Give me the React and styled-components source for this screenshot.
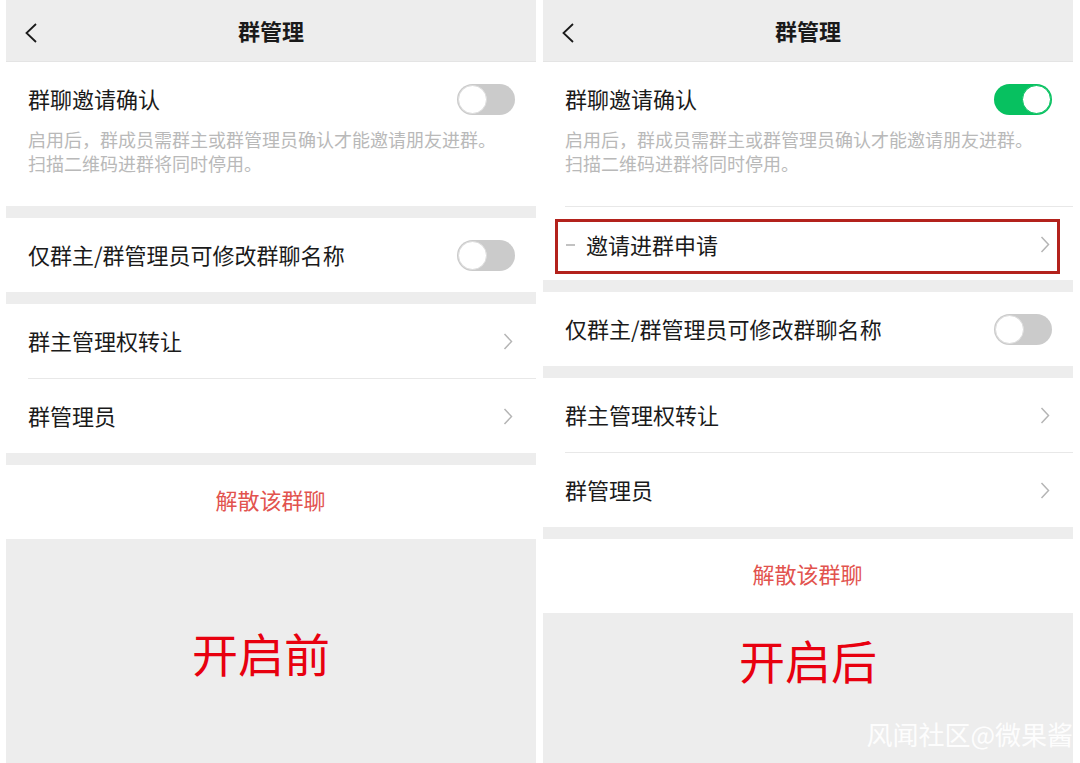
import React from 'react';
import styled, { createGlobalStyle } from 'styled-components';

const GlobalStyle = createGlobalStyle`
  body {
    margin: 0;
    background: #fff;
    font-family: 'Noto Sans CJK SC', 'Noto Sans', sans-serif;
  }
`;

const Page = styled.div`
  position: relative;
  width: 1080px;
  height: 763px;
  overflow: hidden;
  display: flex;
  gap: 7px;
  padding: 0 7px 0 6px;
  box-sizing: border-box;
  background: #fff;
`;

const Panel = styled.div`
  width: 530px;
  height: 100%;
  display: flex;
  flex-direction: column;
  gap: 12px;
  background: #ededed;
`;

const Header = styled.div`
  position: relative;
  height: 62px;
  flex: none;
  display: flex;
  align-items: center;
  justify-content: center;
  padding-bottom: 2px;
  box-sizing: border-box;
  border-bottom: 1px solid #e4e4e4;
  margin-bottom: -12px;
`;

const BackButton = styled.div`
  position: absolute;
  left: 19px;
  top: 23px;
  width: 12px;
  height: 20px;
  display: flex;
`;

const Title = styled.div`
  font-size: 22px;
  font-weight: 600;
  color: #1a1a1a;
  line-height: 1;
`;

const Section = styled.div`
  background: #fff;
  flex: none;
  display: flex;
  flex-direction: column;
`;

const SwitchBlock = styled.div`
  height: 144px;
  box-sizing: border-box;
  padding: 21px 21px 0 22px;
`;

const SwitchHead = styled.div`
  height: 32px;
  display: flex;
  align-items: center;
  justify-content: space-between;
`;

const Label = styled.span`
  font-size: 22px;
  color: #1a1a1a;
  line-height: 1;
  position: relative;
  top: -1px;
`;

const Desc = styled.div`
  margin-top: 12px;
  font-size: 18px;
  line-height: 24px;
  color: #b9b9b9;
`;

const Row = styled.div`
  height: 74px;
  box-sizing: border-box;
  display: flex;
  align-items: center;
  justify-content: ${(p) => (p.$center ? 'center' : 'space-between')};
  padding: 0 ${(p) => (p.$toggle ? 21 : 23)}px 0 22px;
`;

const Separator = styled.div`
  height: 1px;
  margin-left: 22px;
  background: #e8e8e8;
`;

const InviteRow = styled.div`
  height: 73px;
  box-sizing: border-box;
  padding: 12px 13px 6px 12px;
  display: flex;
`;

const Highlight = styled.div`
  flex: 1;
  border: 3px solid #b3221c;
  display: flex;
  align-items: center;
  padding: 0 7px 4px 8px;
`;

const Dash = styled.span`
  width: 9px;
  height: 2px;
  background: #c2c2c2;
  margin-right: 11px;
`;

const Grow = styled.span`
  flex: 1;
`;

const Danger = styled.span`
  font-size: 22px;
  line-height: 1;
  color: #e2534e;
  position: relative;
  top: -3px;
`;

const Track = styled.div`
  width: 58px;
  height: 31px;
  border-radius: 16px;
  background: ${(p) => (p.$on ? '#07c160' : '#cbcbcb')};
  display: flex;
  align-items: center;
  justify-content: ${(p) => (p.$on ? 'flex-end' : 'flex-start')};
  padding: 1px;
  box-sizing: border-box;
`;

const Knob = styled.div`
  width: 29px;
  height: 29px;
  border-radius: 50%;
  background: #fff;
  box-sizing: border-box;
  border: 1px solid ${(p) => (p.$on ? '#07c160' : '#dcdcdc')};
`;

const Filler = styled.div`
  flex: 1;
  display: flex;
  justify-content: center;
  padding-top: ${(p) => p.$top}px;
  padding-right: ${(p) => p.$shift}px;
  margin-top: -12px;
`;

const StageLabel = styled.div`
  font-size: 46px;
  line-height: 46px;
  height: 46px;
  color: #e8000f;
`;

const Watermark = styled.div`
  position: absolute;
  right: 7px;
  bottom: 16px;
  font-size: 26px;
  line-height: 1;
  color: rgba(255, 255, 255, 0.92);
`;

const Chevron = () => (
  <svg width="10" height="17" viewBox="0 0 10 17">
    <polyline points="1.5,1 8.5,8.5 1.5,16" fill="none" stroke="#b5b5b5" strokeWidth="1.5" />
  </svg>
);

const BackIcon = () => (
  <svg width="12" height="20" viewBox="0 0 12 20">
    <polyline points="11,1 1.5,10 11,19" fill="none" stroke="#1a1a1a" strokeWidth="1.8" />
  </svg>
);

const Toggle = ({ on }) => (
  <Track $on={on}>
    <Knob $on={on} />
  </Track>
);

const Screen = ({ on, label, labelTop, shift }) => (
  <Panel>
    <Header>
      <BackButton>
        <BackIcon />
      </BackButton>
      <Title>群管理</Title>
    </Header>

    <Section>
      <SwitchBlock>
        <SwitchHead>
          <Label>群聊邀请确认</Label>
          <Toggle on={on} />
        </SwitchHead>
        <Desc>
          启用后，群成员需群主或群管理员确认才能邀请朋友进群。
          <br />
          扫描二维码进群将同时停用。
        </Desc>
      </SwitchBlock>
      {on && (
        <>
          <Separator />
          <InviteRow>
            <Highlight>
              <Dash />
              <Label>邀请进群申请</Label>
              <Grow />
              <Chevron />
            </Highlight>
          </InviteRow>
        </>
      )}
    </Section>

    <Section>
      <Row $toggle>
        <Label>仅群主/群管理员可修改群聊名称</Label>
        <Toggle on={false} />
      </Row>
    </Section>

    <Section>
      <Row>
        <Label>群主管理权转让</Label>
        <Chevron />
      </Row>
      <Separator />
      <Row>
        <Label>群管理员</Label>
        <Chevron />
      </Row>
    </Section>

    <Section>
      <Row $center>
        <Danger>解散该群聊</Danger>
      </Row>
    </Section>

    <Filler $top={labelTop} $shift={shift}>
      <StageLabel>{label}</StageLabel>
    </Filler>
  </Panel>
);

export default function App() {
  return (
    <>
      <GlobalStyle />
      <Page>
        <Screen on={false} label="开启前" labelTop={90} shift={20} />
        <Screen on label="开启后" labelTop={23} shift={0} />
        <Watermark>风闻社区@微果酱</Watermark>
      </Page>
    </>
  );
}
